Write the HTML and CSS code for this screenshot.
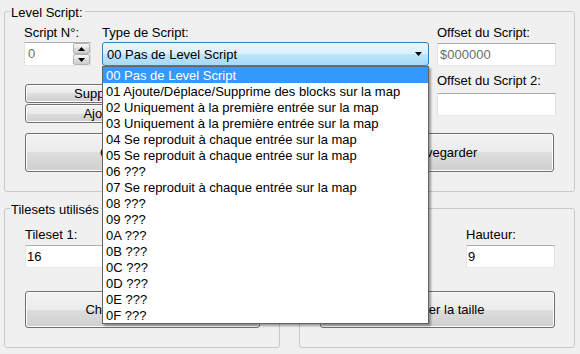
FILE: index.html
```html
<!DOCTYPE html>
<html lang="fr">
<head>
<meta charset="utf-8">
<title>Level Script</title>
<link rel="stylesheet" href="styles.css">
</head>
<body>
<div class="window">
  <fieldset class="group">
    <legend>Level Script:</legend>
    <div class="body-ls">
      <div class="ls-top">
        <div class="ls-left">
          <div class="ls-fields">
            <div class="col-num">
              <span class="lbl">Script N°:</span>
              <div class="spinner">
                <span class="spin-val">0</span>
                <div class="spin-btns">
                  <div class="spin-btn"><svg width="7" height="4" viewBox="0 0 7 4"><polygon points="0,4 3.5,0 7,4" fill="#000"/></svg></div>
                  <div class="spin-btn"><svg width="7" height="4" viewBox="0 0 7 4"><polygon points="0,0 7,0 3.5,4" fill="#000"/></svg></div>
                </div>
              </div>
            </div>
            <div class="col-type">
              <span class="lbl">Type de Script:</span>
              <div class="combo-wrap">
                <div class="combo">
                  <span class="combo-val">00 Pas de Level Script</span>
                  <svg class="combo-arrow" width="7" height="4" viewBox="0 0 7 4"><polygon points="0,0 7,0 3.5,4" fill="#000"/></svg>
                </div>
                <ul class="dropdown">
                  <li class="sel">00 Pas de Level Script</li>
                  <li>01 Ajoute/Déplace/Supprime des blocks sur la map</li>
                  <li>02 Uniquement à la première entrée sur la map</li>
                  <li>03 Uniquement à la première entrée sur la map</li>
                  <li>04 Se reproduit à chaque entrée sur la map</li>
                  <li>05 Se reproduit à chaque entrée sur la map</li>
                  <li>06 ???</li>
                  <li>07 Se reproduit à chaque entrée sur la map</li>
                  <li>08 ???</li>
                  <li>09 ???</li>
                  <li>0A ???</li>
                  <li>0B ???</li>
                  <li>0C ???</li>
                  <li>0D ???</li>
                  <li>0E ???</li>
                  <li>0F ???</li>
                </ul>
              </div>
            </div>
          </div>
          <div class="small-btns">
            <button class="btn btn-small">Supprimer</button>
            <button class="btn btn-small">Ajouter</button>
          </div>
        </div>
        <div class="col-offset">
          <span class="lbl">Offset du Script:</span>
          <div class="tb tb-gray">$000000</div>
          <span class="lbl lbl2">Offset du Script 2:</span>
          <div class="tb tb2"></div>
        </div>
      </div>
      <div class="big-btns">
        <button class="btn btn-load">Charger</button>
        <button class="btn btn-save">Sauvegarder</button>
      </div>
    </div>
  </fieldset>

  <div class="ts-row">
    <fieldset class="group group-half">
      <legend>Tilesets utilisés</legend>
      <div class="body-ts">
        <div class="ts-fields">
          <div class="ts-col">
            <span class="lbl">Tileset 1:</span>
            <div class="tb">16</div>
          </div>
          <div class="ts-col">
            <span class="lbl">Tileset 2:</span>
            <div class="tb">17</div>
          </div>
        </div>
        <button class="btn btn-wide">Changer les tilesets</button>
      </div>
    </fieldset>
    <fieldset class="group group-half">
      <legend>Taille de la map</legend>
      <div class="body-ts">
        <div class="ts-fields">
          <div class="ts-col">
            <span class="lbl">Largeur:</span>
            <div class="tb">12</div>
          </div>
          <div class="ts-col">
            <span class="lbl">Hauteur:</span>
            <div class="tb">9</div>
          </div>
        </div>
        <button class="btn btn-wide">Changer la taille</button>
      </div>
    </fieldset>
  </div>
</div>
</body>
</html>
```

FILE: styles.css
```css
* { box-sizing: border-box; }
html, body { margin: 0; padding: 0; }
body {
  width: 580px;
  height: 354px;
  overflow: hidden;
  background: #f0f0f0;
  font: 13px/15px "Liberation Sans", Arial, sans-serif;
  color: #000;
}
.window { padding: 3px 5px 0 4px; }

.group {
  margin: 0;
  padding: 0;
  min-width: 0;
  border: 1px solid #c6cacd;
  border-radius: 3px;
}
.group > legend {
  margin-left: 5px;
  padding: 3px 2px 0 1px;
  line-height: 14px;
}

.body-ls { padding: 5px 18px 19px 19px; }
.ls-top { display: flex; align-items: flex-start; gap: 8px; }
.ls-left { width: 405px; }
.ls-fields { display: flex; gap: 11px; }
.col-num { width: 67px; }
.col-type { width: 327px; }
.lbl { display: block; height: 15px; white-space: nowrap; }

.spinner {
  margin-top: 2px;
  height: 24px;
  display: flex;
  background: #fff;
  border: 1px solid;
  border-color: #abadb3 #dbdfe6 #e3e9ef #e2e3ea;
}
.spin-val { flex: 1; padding-left: 3px; line-height: 22px; color: #6d6d6d; }
.spin-btns { width: 17px; display: flex; flex-direction: column; }
.spin-btn {
  height: 11px;
  display: flex;
  align-items: center;
  justify-content: center;
  border: 1px solid #b4b4b4;
  border-radius: 2px;
  background: linear-gradient(#f6f6f6, #e6e6e6 50%, #dadada 50%, #cfcfcf);
}

.combo-wrap { position: relative; margin-top: 2px; }
.combo {
  height: 24px;
  display: flex;
  align-items: center;
  padding: 0 6px 0 4px;
  border: 1px solid #3c7fb1;
  border-radius: 3px;
  background: linear-gradient(#eaf6fd, #d9f0fc 50%, #bee6fd 50%, #a7d9f5);
}
.combo-val { flex: 1; white-space: nowrap; }
.combo-arrow { display: block; }

.dropdown {
  position: absolute;
  top: 100%;
  left: 0;
  width: 327px;
  margin: 0;
  padding: 0;
  list-style: none;
  background: #fff;
  border: 1px solid #646464;
  box-shadow: 2px 2px 2px rgba(0, 0, 0, 0.35);
  z-index: 10;
}
.dropdown li {
  height: 16px;
  padding: 1px 0 0 3px;
  line-height: 16px;
  white-space: nowrap;
}
.dropdown li.sel { background: #3399ff; color: #fff; }

.small-btns {
  margin: 18px 0 0 1px;
  width: 158px;
  display: flex;
  flex-direction: column;
  gap: 1px;
}

.btn {
  display: block;
  font: inherit;
  line-height: 15px;
  color: #000;
  padding: 0;
  text-align: center;
  white-space: nowrap;
  border: 1px solid #707070;
  border-radius: 3px;
  background: linear-gradient(#f2f2f2, #ebebeb 50%, #dddddd 50%, #cfcfcf);
  box-shadow: inset 0 0 0 1px #fcfcfc;
}
.btn-small { height: 19px; }

.col-offset { width: 119px; }
.tb {
  height: 23px;
  margin-top: 3px;
  padding: 0 2px;
  line-height: 21px;
  background: #fff;
  border: 1px solid;
  border-color: #abadb3 #dbdfe6 #e3e9ef #e2e3ea;
  white-space: nowrap;
}
.tb-gray { color: #6d6d6d; }
.lbl2 { margin-top: 7px; }
.tb2 { margin-top: 5px; }

.big-btns {
  display: flex;
  justify-content: space-between;
  margin-top: 10px;
  padding: 0 2px 0 1px;
}
.btn-load { width: 197px; height: 39px; }
.btn-save { width: 228px; height: 39px; }

.ts-row { display: flex; gap: 19px; margin-top: 8px; }
.group-half { flex: 0 0 276px; }
.body-ts { padding: 10px 19px 19px 20px; }
.ts-fields { display: flex; justify-content: space-between; }
.ts-col { width: 89px; }
.ts-col .tb { padding: 0 1px; }
.btn-wide { width: 100%; height: 37px; margin-top: 23px; }
```
